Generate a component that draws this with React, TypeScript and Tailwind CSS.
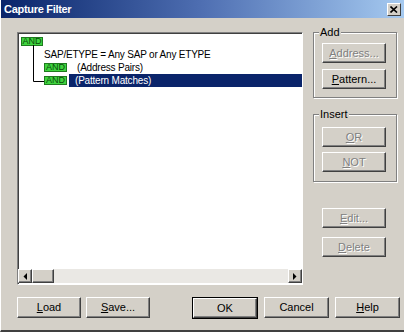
import React from "react";

const btnBase =
  "h-[20px] w-[64px] flex items-center justify-center text-[11px] bg-[#d4d0c8] border border-t-white border-l-white border-r-[#404040] border-b-[#404040] shadow-[inset_-1px_-1px_0_#808080]";

function Btn({
  children,
  disabled,
  className = "",
}: {
  children: React.ReactNode;
  disabled?: boolean;
  className?: string;
}) {
  return (
    <div
      className={`${btnBase} ${className} ${
        disabled ? "text-[#808080] [text-shadow:1px_1px_0_#ffffff]" : "text-black"
      }`}
    >
      {children}
    </div>
  );
}

function AndBox({ className = "" }: { className?: string }) {
  return (
    <div
      className={`h-[9px] flex items-center justify-center bg-[#3fd43f] border border-[#1f7a1f] text-[9px] leading-none text-[#0b4a0b] ${className}`}
    >
      AND
    </div>
  );
}

function Group({
  label,
  className = "",
  children,
}: {
  label: string;
  className?: string;
  children: React.ReactNode;
}) {
  return (
    <div
      className={`relative border border-[#808080] shadow-[inset_1px_1px_0_#ffffff,1px_1px_0_#ffffff] ${className}`}
    >
      <div className="absolute -top-[7px] left-[5px] bg-[#d4d0c8] px-[1px] text-[11px] leading-[12px] text-black">
        {label}
      </div>
      {children}
    </div>
  );
}

function ArrowBtn({ dir }: { dir: "left" | "right" }) {
  return (
    <div className="w-[14px] h-[14px] bg-[#d4d0c8] border border-t-white border-l-white border-r-[#404040] border-b-[#404040] shadow-[inset_-1px_-1px_0_#808080] flex items-center justify-center">
      <svg width="4" height="7" viewBox="0 0 4 7">
        {dir === "left" ? (
          <polygon points="4,0 4,7 0.5,3.5" fill="#000" />
        ) : (
          <polygon points="0,0 0,7 3.5,3.5" fill="#000" />
        )}
      </svg>
    </div>
  );
}

export default function App() {
  return (
    <div
      className="w-[404px] h-[332px] bg-[#d4d0c8] flex flex-col overflow-hidden border-b-[2px] border-b-[#404040] border-l border-l-white"
      style={{ fontFamily: '"Liberation Sans", Arial, sans-serif' }}
    >
      {/* Title bar */}
      <div className="h-[18px] shrink-0 bg-gradient-to-r from-[#0a246a] via-[#4f6fb2] to-[#a6caf0] flex items-center pl-[3px] pr-[3px]">
        <span className="text-white font-bold text-[11px] leading-none tracking-[-0.3px]">Capture Filter</span>
        <div className="ml-auto w-[14px] h-[13px] bg-[#d4d0c8] border border-t-white border-l-white border-r-[#404040] border-b-[#404040] flex items-center justify-center">
          <svg width="8" height="7" viewBox="0 0 8 7">
            <path d="M0.5 0.5 L7 6.5 M7 0.5 L0.5 6.5" stroke="#000" strokeWidth="1.6" />
          </svg>
        </div>
      </div>

      <div className="flex flex-col pl-[16px] pt-[14px]">
        <div className="flex">
          {/* Tree view */}
          <div className="relative w-[286px] h-[253px] bg-white border border-t-[#808080] border-l-[#808080] border-r-white border-b-white shadow-[inset_1px_1px_0_#404040] pt-[2px] pl-[1px] flex flex-col">
            <svg className="absolute left-0 top-0" width="60" height="90">
              <line x1="15.5" y1="12" x2="15.5" y2="48.5" stroke="#000" />
              <line x1="15.5" y1="48.5" x2="26" y2="48.5" stroke="#000" />
            </svg>
            <div className="flex flex-col pl-[1px]">
              <div className="h-[13px] flex items-center pl-[1px]">
                <AndBox className="w-[22px]" />
              </div>
              <div className="h-[13px] flex items-center pl-[24px] text-[10px] tracking-[-0.2px] text-black whitespace-nowrap">
                SAP/ETYPE = Any SAP or Any ETYPE
              </div>
              <div className="h-[13px] flex items-center pl-[24px]">
                <AndBox className="w-[23px]" />
                <span className="ml-[10px] text-[10px] tracking-[-0.2px] text-black whitespace-nowrap">(Address Pairs)</span>
              </div>
              <div className="h-[13px] flex items-center pl-[24px]">
                <AndBox className="w-[23px]" />
                <div className="ml-[2px] flex-1 h-[13px] bg-[#0a246a] text-white text-[10px] tracking-[-0.2px] flex items-center pl-[6px] whitespace-nowrap">
                  (Pattern Matches)
                </div>
              </div>
            </div>
            {/* Horizontal scrollbar */}
            <div className="mt-auto -ml-[1px] flex h-[14px] mb-[1px]">
              <ArrowBtn dir="left" />
              <div className="w-[22px] h-[14px] bg-[#d4d0c8] border border-t-white border-l-white border-r-[#404040] border-b-[#404040] shadow-[inset_-1px_-1px_0_#808080]" />
              <div className="flex-1 h-[14px] bg-[#eae8e4]" />
              <ArrowBtn dir="right" />
            </div>
          </div>

          {/* Right column */}
          <div className="ml-[10px] w-[84px] flex flex-col">
            <Group label="Add" className="h-[66px] pt-[10px] pl-[8px] flex flex-col gap-[6px]">
              <Btn disabled>
                <span><u>A</u>ddress...</span>
              </Btn>
              <Btn>
                <span><u>P</u>attern...</span>
              </Btn>
            </Group>
            <Group label="Insert" className="mt-[16px] h-[68px] pt-[12px] pl-[8px] flex flex-col gap-[5px]">
              <Btn disabled>
                <span><u>O</u>R</span>
              </Btn>
              <Btn disabled>
                <span><u>N</u>OT</span>
              </Btn>
            </Group>
            <div className="mt-[26px] pl-[9px] flex flex-col gap-[9px]">
              <Btn disabled>
                <span><u>E</u>dit...</span>
              </Btn>
              <Btn disabled>
                <span><u>D</u>elete</span>
              </Btn>
            </div>
          </div>
        </div>

        {/* Bottom buttons */}
        <div className="flex mt-[12px]">
          <Btn className="h-[21px]">
            <span><u>L</u>oad</span>
          </Btn>
          <Btn className="h-[21px] ml-[5px]">
            <span><u>S</u>ave...</span>
          </Btn>
          <div className="ml-[42px] border border-black">
            <Btn className="h-[19px] w-[62px]">OK</Btn>
          </div>
          <Btn className="h-[21px] ml-[6px] w-[65px]">Cancel</Btn>
          <Btn className="h-[21px] ml-[6px] w-[65px]">
            <span><u>H</u>elp</span>
          </Btn>
        </div>
      </div>
    </div>
  );
}
